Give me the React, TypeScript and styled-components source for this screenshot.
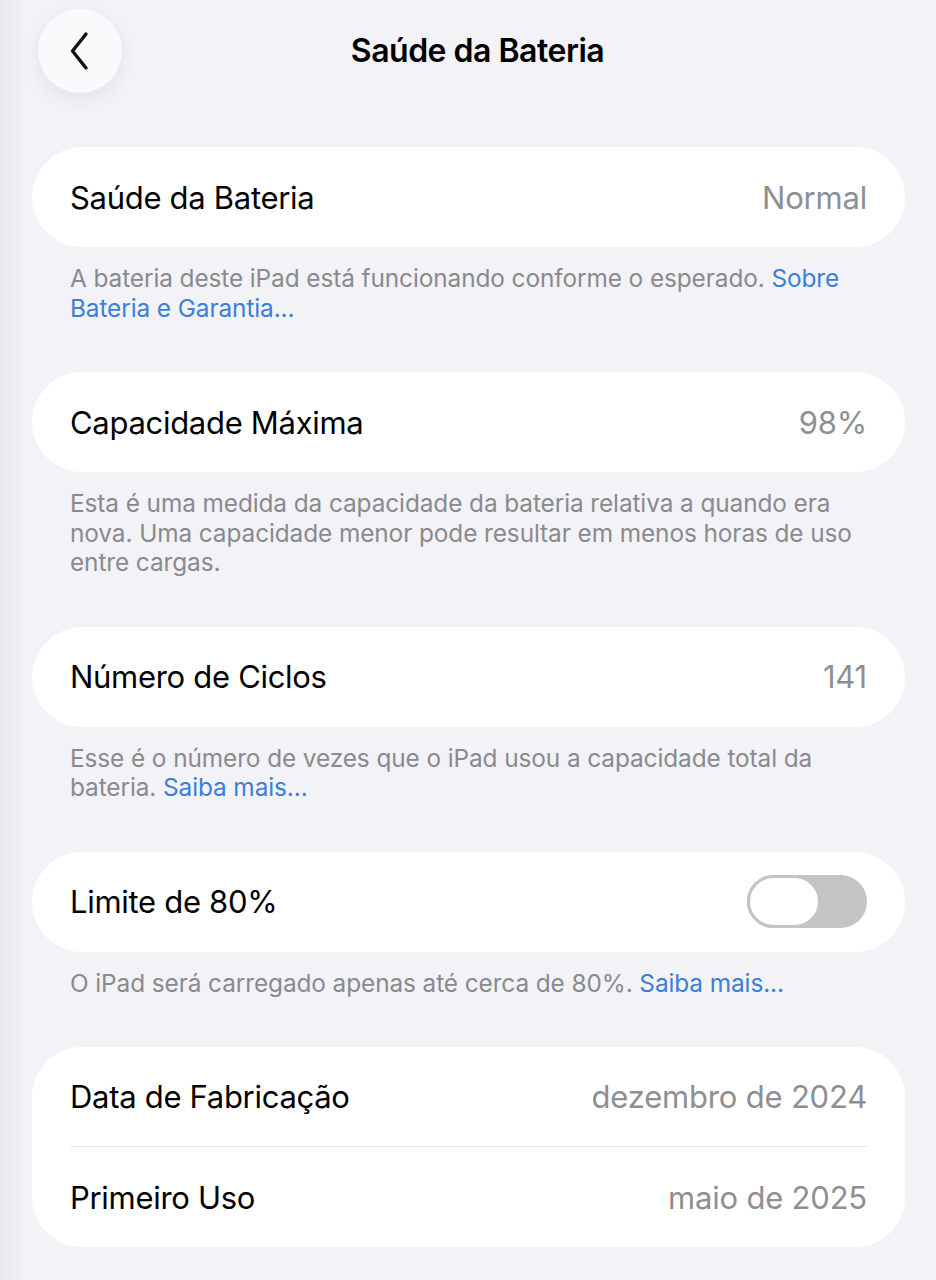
import React from 'react';
import styled, { createGlobalStyle } from 'styled-components';

const GlobalStyle = createGlobalStyle`
  html, body {
    margin: 0;
    padding: 0;
    background: #f2f2f7;
  }
  body {
    font-family: Inter, "Noto Sans", "Liberation Sans", sans-serif;
    -webkit-font-smoothing: antialiased;
  }
`;

const Page = styled.div`
  min-height: 1280px;
  background: linear-gradient(90deg, #e8e8ed 0px, #f2f2f7 26px);
  padding: 0 31px 0 32px;
  box-sizing: border-box;
`;

const NavBar = styled.div`
  height: 102px;
  display: grid;
  grid-template-columns: 108px 1fr 90px;
  align-items: center;
`;

const BackButton = styled.button`
  width: 84px;
  height: 84px;
  margin: -1px 0 0 6px;
  border: none;
  border-radius: 50%;
  background: #fafafc;
  box-shadow: 0 6px 20px rgba(0, 0, 0, 0.07);
  display: flex;
  align-items: center;
  justify-content: center;
  padding: 0;
`;

const Title = styled.h1`
  margin: -1px 0 0;
  text-align: center;
  font-size: 32px;
  font-weight: 600;
  letter-spacing: -0.5px;
  color: #000;
`;

const Card = styled.div<{ $first?: boolean }>`
  background: #fff;
  border-radius: 50px;
  padding: 0 38px;
  margin-top: ${p => (p.$first ? '45px' : '0')};
`;

const Row = styled.div<{ $divider?: boolean }>`
  height: 100px;
  display: flex;
  align-items: center;
  justify-content: space-between;
  border-bottom: ${p => (p.$divider ? '1.5px solid #e3e3e6' : 'none')};
  box-sizing: border-box;
`;

const Label = styled.span`
  font-size: 31px;
  color: #000;
  letter-spacing: -0.3px;
`;

const Value = styled.span`
  font-size: 31px;
  color: #8e8e93;
  letter-spacing: -0.2px;
`;

const Footer = styled.p`
  margin: 0;
  padding: 17px 38px 49px;
  font-size: 24.4px;
  line-height: 29.5px;
  color: #8a8a8e;
  letter-spacing: -0.1px;
`;

const Link = styled.span`
  color: #3a7fd8;
`;

const Track = styled.div`
  width: 120px;
  height: 53px;
  border-radius: 27px;
  background: #c4c4c7;
  display: flex;
  align-items: center;
  box-sizing: border-box;
`;

const Knob = styled.div`
  width: 74px;
  height: 53px;
  border-radius: 27px;
  background: #fff;
  border: 3px solid #c4c4c7;
  box-sizing: border-box;
`;

const ChevronLeft = () => (
  <svg width="28" height="40" viewBox="0 0 28 40" fill="none">
    <path d="M20 3 L6.5 20 L20 37" stroke="#111" strokeWidth="3.4" strokeLinecap="round" strokeLinejoin="round" />
  </svg>
);

export default function App() {
  return (
    <>
      <GlobalStyle />
      <Page>
        <NavBar>
          <BackButton aria-label="Voltar">
            <ChevronLeft />
          </BackButton>
          <Title>Saúde da Bateria</Title>
          <div />
        </NavBar>

        <Card $first>
          <Row>
            <Label>Saúde da Bateria</Label>
            <Value>Normal</Value>
          </Row>
        </Card>
        <Footer>
          A bateria deste iPad está funcionando conforme o esperado. <Link>Sobre Bateria e Garantia...</Link>
        </Footer>

        <Card>
          <Row>
            <Label>Capacidade Máxima</Label>
            <Value>98%</Value>
          </Row>
        </Card>
        <Footer>
          Esta é uma medida da capacidade da bateria relativa a quando era nova. Uma capacidade menor pode
          resultar em menos horas de uso entre cargas.
        </Footer>

        <Card>
          <Row>
            <Label>Número de Ciclos</Label>
            <Value>141</Value>
          </Row>
        </Card>
        <Footer>
          Esse é o número de vezes que o iPad usou a capacidade total da bateria. <Link>Saiba mais...</Link>
        </Footer>

        <Card>
          <Row>
            <Label>Limite de 80%</Label>
            <Track>
              <Knob />
            </Track>
          </Row>
        </Card>
        <Footer>
          O iPad será carregado apenas até cerca de 80%. <Link>Saiba mais...</Link>
        </Footer>

        <Card>
          <Row $divider>
            <Label>Data de Fabricação</Label>
            <Value>dezembro de 2024</Value>
          </Row>
          <Row>
            <Label>Primeiro Uso</Label>
            <Value>maio de 2025</Value>
          </Row>
        </Card>
      </Page>
    </>
  );
}
